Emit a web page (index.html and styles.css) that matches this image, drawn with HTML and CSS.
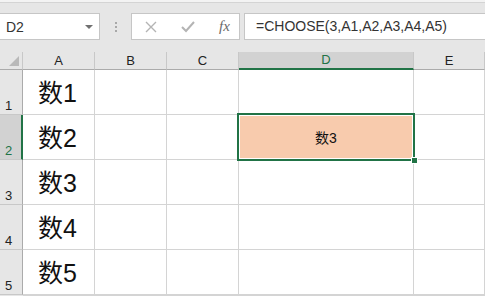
FILE: index.html
```html
<!DOCTYPE html>
<html lang="zh">
<head>
  <meta charset="UTF-8">
  <title>CHOOSE</title>
  <link rel="stylesheet" href="styles.css">
</head>
<body>
  <div class="formula-bar">
    <div class="name-box">
      <span>D2</span>
      <span class="caret"></span>
    </div>
    <div class="grip"><i></i><i></i><i></i></div>
    <div class="fx-buttons">
      <svg width="14" height="14" viewBox="0 0 14 14"><path d="M2 2 L12 12 M12 2 L2 12" stroke="#b4b4b4" stroke-width="1.4" fill="none"/></svg>
      <svg width="16" height="14" viewBox="0 0 16 14"><path d="M2 7 L6 11 L14 2" stroke="#b4b4b4" stroke-width="2" fill="none"/></svg>
      <span class="fx">fx</span>
    </div>
    <div class="formula">=CHOOSE(3,A1,A2,A3,A4,A5)</div>
  </div>

  <div class="sheet">
    <div class="hd corner"><span class="tri"></span></div>
    <div class="hd col">A</div>
    <div class="hd col">B</div>
    <div class="hd col">C</div>
    <div class="hd col active">D</div>
    <div class="hd col">E</div>

    <div class="hd row">1</div>
    <div class="cell big">数1</div><div class="cell"></div><div class="cell"></div><div class="cell"></div><div class="cell"></div>

    <div class="hd row active">2</div>
    <div class="cell big">数2</div><div class="cell"></div><div class="cell"></div>
    <div class="cell selected"><span>数3</span><span class="handle"></span></div>
    <div class="cell"></div>

    <div class="hd row">3</div>
    <div class="cell big">数3</div><div class="cell"></div><div class="cell"></div><div class="cell"></div><div class="cell"></div>

    <div class="hd row">4</div>
    <div class="cell big">数4</div><div class="cell"></div><div class="cell"></div><div class="cell"></div><div class="cell"></div>

    <div class="hd row">5</div>
    <div class="cell big">数5</div><div class="cell"></div><div class="cell"></div><div class="cell"></div><div class="cell"></div>

    <div class="hd tail"></div>
    <div class="cell tail"></div><div class="cell tail"></div><div class="cell tail"></div><div class="cell tail"></div><div class="cell tail"></div>
  </div>
</body>
</html>
```

FILE: styles.css
```css
body {
  margin: 0;
  width: 485px;
  height: 296px;
  overflow: hidden;
  background: #fff;
  font-family: "Liberation Sans", "Noto Sans CJK SC", sans-serif;
  color: #222;
}
.formula-bar {
  height: 52px;
  box-sizing: border-box;
  background: #e6e6e6;
  border-top: 2px solid #f3f3f3;
  box-shadow: inset 0 1px 0 #d4d4d4;
  display: flex;
  align-items: flex-start;
  padding-top: 11px;
}
.name-box {
  width: 100px;
  height: 27px;
  box-sizing: border-box;
  background: #fff;
  border: 1px solid #c6c6c6;
  border-left: none;
  display: flex;
  align-items: center;
  justify-content: space-between;
  padding: 0 5px 0 6px;
  font-size: 14px;
  color: #333;
}
.caret {
  width: 0;
  height: 0;
  border-left: 4px solid transparent;
  border-right: 4px solid transparent;
  border-top: 4px solid #707070;
  margin-right: 1px;
}
.grip {
  width: 31px;
  height: 27px;
  display: flex;
  flex-direction: column;
  align-items: center;
  justify-content: center;
  gap: 2px;
}
.grip i {
  width: 2px;
  height: 2px;
  background: #a8a8a8;
}
.fx-buttons {
  width: 109px;
  height: 27px;
  box-sizing: border-box;
  background: #fff;
  border: 1px solid #c6c6c6;
  display: flex;
  align-items: center;
  padding-left: 12px;
  gap: 22px;
}
.fx {
  font-family: "Liberation Serif", serif;
  font-style: italic;
  font-size: 15px;
  color: #6a6a6a;
  margin-left: 1px;
}
.formula {
  flex: 1;
  height: 27px;
  box-sizing: border-box;
  margin-left: 4px;
  background: #fff;
  border: 1px solid #c6c6c6;
  border-right: none;
  font-size: 14px;
  line-height: 25px;
  padding-left: 11px;
  color: #333;
}
.sheet {
  display: grid;
  grid-template-columns: 23px 72px 72px 72px 175px 71px;
  grid-template-rows: 18px repeat(5, 45px) 1px;
  overflow: hidden;
}
.hd {
  background: #e6e6e6;
  box-sizing: border-box;
  font-size: 13px;
  color: #222;
}
.col {
  border-right: 1px solid #c8c8c8;
  border-bottom: 1px solid #ababab;
  text-align: center;
  line-height: 17px;
}
.corner {
  border-right: 1px solid #c8c8c8;
  border-bottom: 1px solid #ababab;
  position: relative;
}
.tri {
  position: absolute;
  right: 3px;
  bottom: 3px;
  width: 0;
  height: 0;
  border-left: 10px solid transparent;
  border-bottom: 10px solid #b9b9b9;
}
.row {
  border-right: 1px solid #ababab;
  border-bottom: 1px solid #c8c8c8;
  display: flex;
  align-items: flex-end;
  padding: 0 0 1px 5px;
}
.tail {
  border-bottom: none;
}
.hd.active {
  background: #d2d2d2;
  color: #217346;
}
.col.active {
  border-bottom: 2px solid #217346;
  line-height: 16px;
}
.row.active {
  border-right: 2px solid #217346;
}
.cell {
  border-right: 1px solid #d4d4d4;
  border-bottom: 1px solid #d4d4d4;
  box-sizing: border-box;
}
.big {
  font-size: 25px;
  color: #111;
  display: flex;
  align-items: flex-end;
  justify-content: center;
  padding-bottom: 5px;
  padding-right: 2px;
}
.selected {
  position: relative;
  background: #f8cbad;
  font-size: 14px;
  color: #111;
  display: flex;
  align-items: center;
  justify-content: center;
}
.selected::after {
  content: "";
  position: absolute;
  left: -2px;
  top: -2px;
  right: -2px;
  bottom: -2px;
  border: 2px solid #217346;
  box-shadow: inset 0 0 0 1px #fff;
}
.handle {
  position: absolute;
  right: -5px;
  bottom: -5px;
  width: 5px;
  height: 5px;
  background: #217346;
  border: 1px solid #fff;
  z-index: 1;
}
```
